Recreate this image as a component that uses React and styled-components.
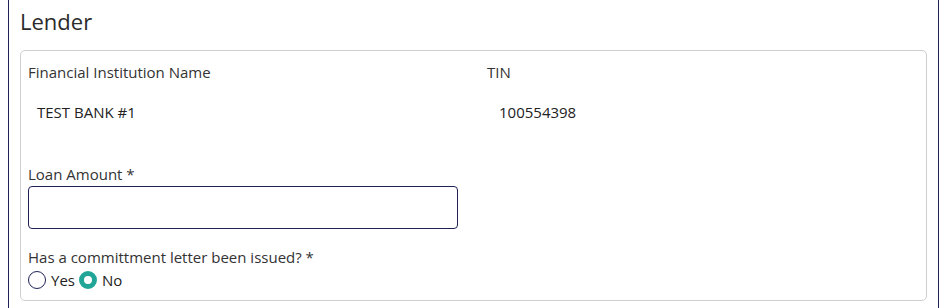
import React from "react";
import styled, { createGlobalStyle } from "styled-components";

const Global = createGlobalStyle`
  html, body { margin: 0; padding: 0; background: #fff; }
  body { font-family: "Open Sans", "Noto Sans", sans-serif; color: #212529; }
  * { box-sizing: border-box; }
`;

const Panel = styled.section`
  margin-left: 8px;
  width: 931px;
  height: 308px;
  border-left: 1px solid #1f2157;
  border-right: 1px solid #1f2157;
  padding: 6px 11px 0 11px;
`;

const Title = styled.h2`
  margin: 0 0 14px 0;
  font-size: 22px;
  font-weight: 400;
  line-height: 30px;
  color: #2b2b2b;
`;

const Card = styled.div`
  border: 1px solid #cfcfcf;
  border-radius: 5px;
  padding: 10px 8px 8px 7px;
  height: 251px;
`;

const Row = styled.div`
  display: grid;
  grid-template-columns: 459px 1fr;
`;

const Field = styled.div`
  display: flex;
  flex-direction: column;
`;

const Label = styled.div`
  font-size: 15px;
  line-height: 22px;
  color: #333;
`;

const Value = styled.div`
  font-size: 15px;
  line-height: 22px;
  color: #222;
  padding-left: ${(p) => p.$indent}px;
  margin-top: 18px;
`;

const FormGroup = styled.div`
  margin-top: ${(p) => p.$top}px;
  display: flex;
  flex-direction: column;
`;

const Input = styled.input`
  margin-top: 1px;
  width: 430px;
  height: 43px;
  border: 1px solid #1f2157;
  border-radius: 4px;
  font-size: 15px;
  padding: 0 10px;
  outline: none;
`;

const RadioRow = styled.div`
  display: flex;
  align-items: center;
  gap: 4px;
  margin-top: 1px;
`;

const RadioOption = styled.label`
  display: flex;
  align-items: center;
  gap: 5px;
  font-size: 15px;
  line-height: 22px;
  color: #222;
`;

const RadioDot = styled.span`
  width: 18px;
  height: 18px;
  border-radius: 50%;
  flex: none;
  border: ${(p) => (p.$checked ? "5.5px solid #21a596" : "1px solid #1f2157")};
  background: #fff;
`;

export default function App() {
  return (
    <>
      <Global />
      <Panel>
        <Title>Lender</Title>
        <Card>
          <Row>
            <Field>
              <Label>Financial Institution Name</Label>
              <Value $indent={9}>TEST BANK #1</Value>
            </Field>
            <Field>
              <Label>TIN</Label>
              <Value $indent={12}>100554398</Value>
            </Field>
          </Row>
          <FormGroup $top={40}>
            <Label>Loan Amount *</Label>
            <Input type="text" />
          </FormGroup>
          <FormGroup $top={17}>
            <Label>Has a committment letter been issued? *</Label>
            <RadioRow>
              <RadioOption>
                <RadioDot />
                Yes
              </RadioOption>
              <RadioOption>
                <RadioDot $checked />
                No
              </RadioOption>
            </RadioRow>
          </FormGroup>
        </Card>
      </Panel>
    </>
  );
}
